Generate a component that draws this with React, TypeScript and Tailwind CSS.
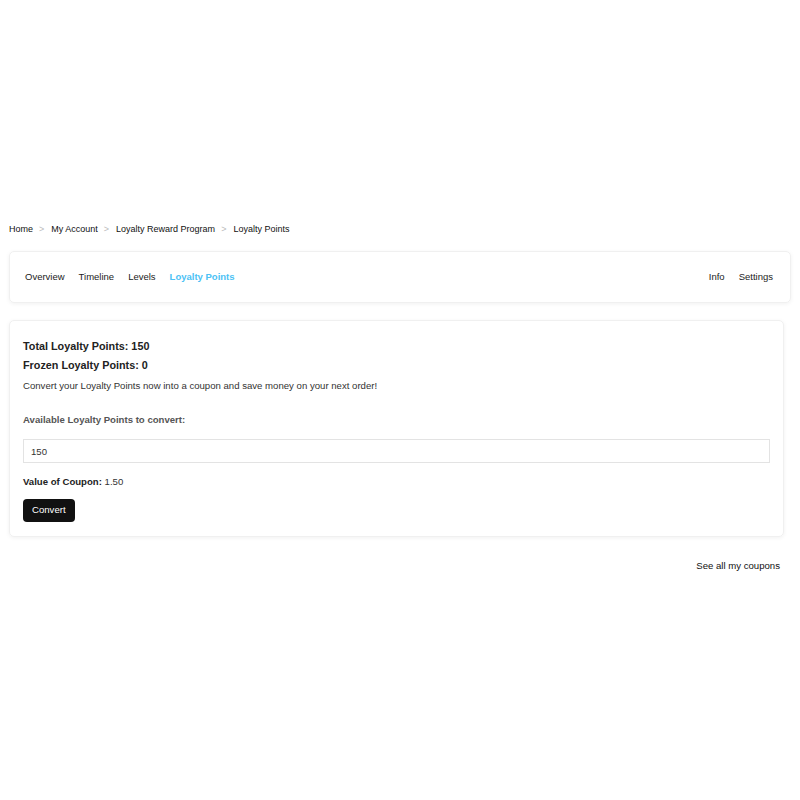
const crumbs = ["Home", "My Account", "Loyalty Reward Program", "Loyalty Points"];

export default function App() {
  return (
    <div className="min-h-screen bg-white pt-[222px] px-[9px] text-[#222] font-['Liberation_Sans',Arial,sans-serif]">
      {/* breadcrumb */}
      <nav className="flex items-center h-[15px] text-[9px] text-[#111]">
        {crumbs.map((c, i) => (
          <span key={c} className="flex items-center">
            {i > 0 && <span className="ml-[6px] mr-[7px] text-[#bbb]">&gt;</span>}
            <span>{c}</span>
          </span>
        ))}
      </nav>

      {/* tabs */}
      <div className="mt-[14px] h-[52px] rounded-[5px] border border-[#f0f0f0] shadow-[0_1px_4px_rgba(0,0,0,0.06)] flex items-center justify-between pl-[15px] pr-[17px] pt-[1px] text-[9.5px]">
        <div className="flex items-center gap-[14px]">
          <span>Overview</span>
          <span>Timeline</span>
          <span>Levels</span>
          <span className="font-bold text-[#4cc2f5]">Loyalty Points</span>
        </div>
        <div className="flex items-center gap-[14px]">
          <span>Info</span>
          <span>Settings</span>
        </div>
      </div>

      {/* content card */}
      <div className="mt-[17px] mr-[7px] rounded-[5px] border border-[#f0f0f0] shadow-[0_1px_4px_rgba(0,0,0,0.06)] px-[13px] pt-[18px] pb-[14px]">
        <h2 className="text-[10.8px] font-bold text-[#222] leading-[14px]">Total Loyalty Points: 150</h2>
        <h2 className="mt-[5px] text-[10.8px] font-bold text-[#222] leading-[14px]">Frozen Loyalty Points: 0</h2>
        <p className="mt-[7px] text-[9.6px] text-[#333] leading-[14px]">
          Convert your Loyalty Points now into a coupon and save money on your next order!
        </p>
        <label className="block mt-[20px] text-[9.6px] font-bold text-[#555] leading-[14px]">
          Available Loyalty Points to convert:
        </label>
        <input
          readOnly
          value="150"
          className="mt-[12px] block w-full h-[24px] border border-[#e3e3e3] px-[7px] text-[9.6px] text-[#333] outline-none"
        />
        <div className="mt-[12px] text-[9.6px] text-[#333] leading-[14px]">
          <span className="font-bold text-[#222]">Value of Coupon:</span> 1.50
        </div>
        <button className="mt-[10px] h-[23px] px-[9px] rounded-[4px] bg-[#111] text-white text-[9.6px]">
          Convert
        </button>
      </div>

      <div className="mt-[22px] mr-[11px] flex justify-end text-[9.6px] text-[#111]">
        See all my coupons
      </div>
    </div>
  );
}
